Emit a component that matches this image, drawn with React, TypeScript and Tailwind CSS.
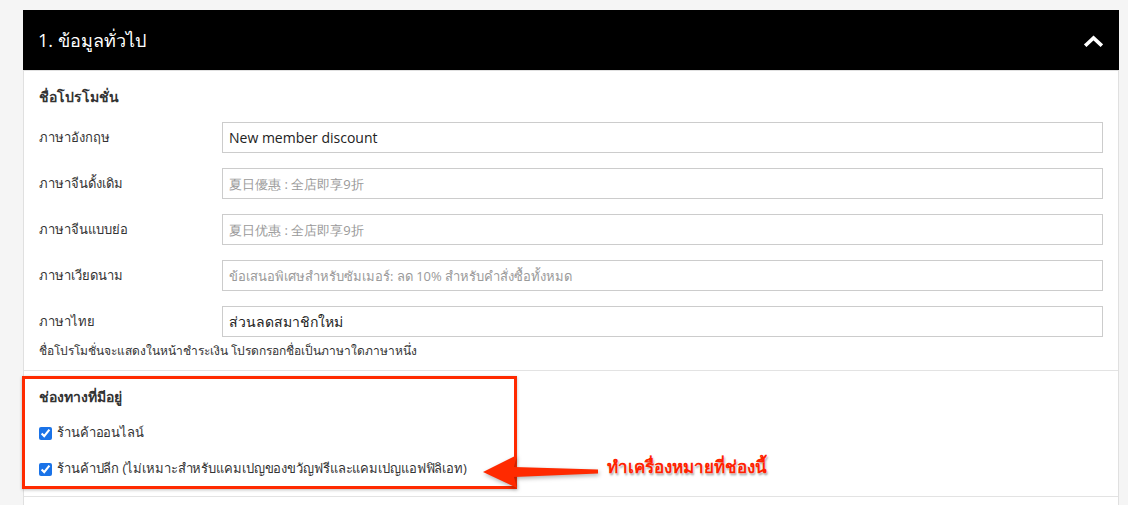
import React from 'react'

type LangRow = {
    label: string;
    value?: string;
    placeholder?: string;
}

const rows: LangRow[] = [
    { label: 'ภาษาอังกฤษ', value: 'New member discount' },
    { label: 'ภาษาจีนดั้งเดิม', placeholder: '夏日優惠 : 全店即享9折' },
    { label: 'ภาษาจีนแบบย่อ', placeholder: '夏日优惠 : 全店即享9折' },
    { label: 'ภาษาเวียดนาม', placeholder: 'ข้อเสนอพิเศษสำหรับซัมเมอร์: ลด 10% สำหรับคำสั่งซื้อทั้งหมด' },
    { label: 'ภาษาไทย', value: 'ส่วนลดสมาชิกใหม่' },
]

const channels = [
    'ร้านค้าออนไลน์',
    'ร้านค้าปลีก (ไม่เหมาะสำหรับแคมเปญของขวัญฟรีและแคมเปญแอฟฟิลิเอท)',
]

const App: React.FC = () => {
    return (
        <div className="min-h-screen bg-[#f5f5f5] pl-[23px] pr-[9px] pt-[10px] font-['Open_Sans','Noto_Sans',sans-serif] text-[#333]">
            {/* Section header */}
            <div className="flex h-[60px] items-center justify-between bg-black pl-[15px] pr-[16px]">
                <h3 className="text-[18px] text-white">1. ข้อมูลทั่วไป</h3>
                <svg width="19" height="12" viewBox="0 0 19 12" className="mt-[2px]">
                    <polyline points="2.5,9.5 9.5,3 16.5,9.5" fill="none" stroke="#fff" strokeWidth="3.6" strokeLinecap="square" />
                </svg>
            </div>

            <div className="border-x border-t border-[#e0e0e0] bg-white h-[435px]">
                {/* Promotion name */}
                <div className="border-b border-[#e3e3e3] px-[15px] pt-[16px] pb-[10px]">
                    <div className="text-[14px] font-bold leading-[20px] mb-[15px]">ชื่อโปรโมชั่น</div>
                    <div className="flex flex-col gap-[15px]">
                        {rows.map((row, i) => (
                            <div key={i} className="flex items-center">
                                <label className="w-[183px] shrink-0 text-[13px]">{row.label}</label>
                                <input
                                    readOnly
                                    value={row.value ?? ''}
                                    placeholder={row.placeholder}
                                    className="h-[31px] flex-1 border border-[#ccc] px-[6px] text-[14px] text-[#222] placeholder:text-[#9a9a9a] placeholder:text-[13px] outline-none"
                                />
                            </div>
                        ))}
                    </div>
                    <p className="mt-[5px] text-[12px] leading-[18px]">ชื่อโปรโมชั่นจะแสดงในหน้าชำระเงิน โปรดกรอกชื่อเป็นภาษาใดภาษาหนึ่ง</p>
                </div>

                {/* Available channels */}
                <div className="relative border-b border-[#e3e3e3] px-[15px] pt-[16px] pb-[17px]">
                    <div className="text-[14px] font-bold leading-[20px]">ช่องทางที่มีอยู่</div>
                    {channels.map((c, i) => (
                        <label key={i} className="mt-[16px] flex h-[20px] items-center gap-[5px] text-[13px] tracking-[-0.1px]">
                            <input type="checkbox" defaultChecked className="h-[13px] w-[13px] accent-[#1a73e8]" />
                            {c}
                        </label>
                    ))}

                    {/* annotation: outline, arrow and note */}
                    <div className="pointer-events-none absolute left-[-2px] top-[5px] h-[113px] w-[495px] border-[3px] border-[#ff2a00] shadow-[0_1px_3px_rgba(0,0,0,0.25)]" />
                    <svg width="122" height="44" viewBox="0 0 122 44" className="absolute left-[456px] top-[79px] drop-shadow-[1px_2px_2px_rgba(0,0,0,0.3)]">
                        <polygon points="3,22 37,5 34,17 118,19.5 118,23.5 34,27 37,38" fill="#ff2a00" />
                    </svg>
                    <div className="absolute left-[583px] top-[86px] text-[17px] font-bold leading-[20px] text-[#ff2200] [text-shadow:0_0_2px_#fff,1px_2px_2px_rgba(0,0,0,0.35)]">
                        ทำเครื่องหมายที่ช่องนี้
                    </div>
                </div>
            </div>
        </div>
    )
}

export default App
